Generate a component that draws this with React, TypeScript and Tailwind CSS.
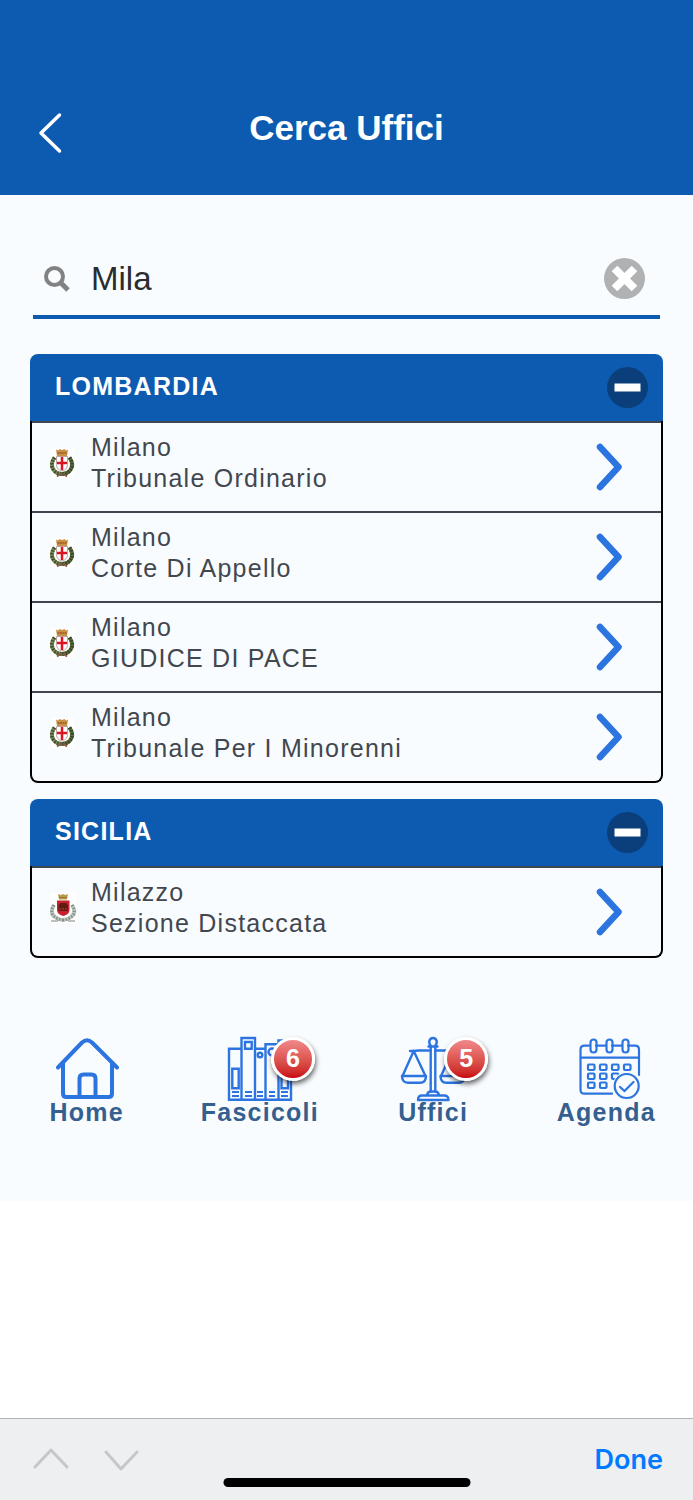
import React, { useState } from "react";

type Office = { city: string; name: string };

const regions: { name: string; crest: React.ReactNode; offices: Office[] }[] = [
  {
    name: "LOMBARDIA",
    crest: <MilanoCrest />,
    offices: [
      { city: "Milano", name: "Tribunale Ordinario" },
      { city: "Milano", name: "Corte Di Appello" },
      { city: "Milano", name: "GIUDICE DI PACE" },
      { city: "Milano", name: "Tribunale Per I Minorenni" },
    ],
  },
  {
    name: "SICILIA",
    crest: <MilazzoCrest />,
    offices: [{ city: "Milazzo", name: "Sezione Distaccata" }],
  },
];

const navItems = [
  { label: "Home", icon: <HomeIcon />, badge: 0 },
  { label: "Fascicoli", icon: <BindersIcon />, badge: 6 },
  { label: "Uffici", icon: <ScalesIcon />, badge: 5 },
  { label: "Agenda", icon: <CalendarIcon />, badge: 0 },
];

function MilanoCrest() {
  return (
    <svg width="27" height="30" viewBox="0 0 27 30" aria-hidden="true">
      <rect x="1" width="23" height="30" fill="#fff" />
      <path d="M4.500 9.500Q-0.500 17 4 22.500Q7 26 12 26" fill="none" stroke="#7d8a5c" strokeWidth="4" />
      <path d="M19.500 9.500Q24.500 17 20 22.500Q17 26 12 26" fill="none" stroke="#5c6b42" strokeWidth="4" />
      <path d="M4.500 9.500Q-0.500 17 4 22.500Q7 26 12 26" fill="none" stroke="#3d4e27" strokeWidth="3.500" strokeDasharray="1.500 1.500" />
      <path d="M19.500 9.500Q24.500 17 20 22.500Q17 26 12 26" fill="none" stroke="#34451f" strokeWidth="3.500" strokeDasharray="1.500 1.500" />
      <path d="M7 28.500l4-3M17 28.500l-4-3" stroke="#8b5a4a" strokeWidth="2" />
      <path d="M6 1.500l2 1 1.500-1.500 2.500 1 2.500-1 1.500 1.500 2-1-1 6.500h-10z" fill="#c98f45" />
      <path d="M7.500 5h9" stroke="#9a5a26" strokeWidth="1.500" strokeDasharray="2 0.500" />
      <path d="M6.500 8.500h11v8q0 5-5.500 6.500q-5.500-1.500-5.500-6.500z" fill="#fff" stroke="#b9a3a3" />
      <path d="M12 9v13M7 15h10" stroke="#dc1420" strokeWidth="2.500" />
    </svg>
  );
}

function MilazzoCrest() {
  return (
    <svg width="27" height="30" viewBox="0 0 27 30" aria-hidden="true">
      <rect width="26" height="30" fill="#fff" />
      <path d="M4 12Q-1 20 5 24Q9 27 13 27" fill="none" stroke="#c3cac4" strokeWidth="4" />
      <path d="M22 12Q27 20 21 24Q17 27 13 27" fill="none" stroke="#c3cac4" strokeWidth="4" />
      <path d="M4 12Q-1 20 5 24Q9 27 13 27" fill="none" stroke="#849086" strokeWidth="3" strokeDasharray="1.500 1.500" />
      <path d="M22 12Q27 20 21 24Q17 27 13 27" fill="none" stroke="#849086" strokeWidth="3" strokeDasharray="1.500 1.500" />
      <path d="M1 28h7M18 28h7" stroke="#a9a9a9" strokeWidth="1.500" />
      <path d="M8 1l2.500 1 2.500-1 2.500 1 2.500-1-1 5.500h-8z" fill="#b89a4c" />
      <path d="M9 4.500h8" stroke="#8a6c2c" strokeDasharray="1.500 0.500" />
      <path d="M7 7.500h12.500v9q0 5-6.200 6.500q-6.300-1.500-6.300-6.500z" fill="#c9202d" />
      <path d="M8.500 18v-5.500l2-2.500h5.500l2 2.500v5.500z" fill="#5c1d14" />
      <path d="M9 16h9" stroke="#b3402c" strokeWidth="1" strokeDasharray="2 1" />
    </svg>
  );
}

function HomeIcon() {
  return (
    <svg width="70" height="66" viewBox="0 0 70 66" fill="none" stroke="#2c74e0" strokeWidth="4" strokeLinecap="round" aria-hidden="true">
      <path d="M6 31.500L30 6.500Q35 2 40 6.500L65 31.500" />
      <path d="M11 27.500V57.500Q11 61 14.500 61H56.500Q60 61 60 57.500V27.500" />
      <path d="M27.500 60V42.500Q27.500 38.500 31.500 38.500H39.500Q43.500 38.500 43.500 42.500V60" />
    </svg>
  );
}

function BindersIcon() {
  return (
    <svg width="70" height="66" viewBox="0 0 70 66" fill="none" stroke="#2c74e0" strokeWidth="2.400" aria-hidden="true">
      <path d="M16.500 12.700H4V63.700H66V4.500H53.500V63.700M16.500 63.700V2H30V63.700M30 12.700H40.500M40.500 63.700V8.300H53.500" />
      <path d="M7.300 32.700H13.700V52.300H7.300zM56.500 32.700H63V52.300H56.500zM20 6H26.700V12.700H20z" />
      <circle cx="35" cy="19" r="2.300" />
      <circle cx="47" cy="16" r="3.500" />
      <path
        d="M7 56h7M20 56h7M32 56h6M44 56h6M56 56h7M7 60h7M20 60h7M32 60h6M44 60h6M56 60h7"
        strokeWidth="1.800"
      />
    </svg>
  );
}

function ScalesIcon() {
  return (
    <svg width="70" height="66" viewBox="0 0 70 66" fill="none" stroke="#2c74e0" strokeWidth="2.400" strokeLinecap="round" strokeLinejoin="round" aria-hidden="true">
      <path d="M33 10Q30.500 7.500 31.500 4.500Q32.500 2 35 2Q37.500 2 38.500 4.500Q39.500 7.500 37 10M30.500 10.500H39.500" />
      <path d="M32.700 11V55.500M37.300 11V55.500" />
      <path d="M12 15H16L20 14.500H32.500M37.500 14.500H50L54 15H58" />
      <path d="M15.700 15L4.500 40M15.700 15L27.500 40M54.500 15L43 40M54.500 15L66 40" />
      <path d="M4 40H28Q28 46.700 22 46.700H10Q4 46.700 4 40zM42.500 40H66.500Q66.500 46.700 60.500 46.700H48.500Q42.500 46.700 42.500 40z" />
      <path d="M29 59.500Q29.500 55.500 33 55.500H37Q40.500 55.500 41 59.500M20 64Q20 59.500 24 59.500H46Q50.500 59.500 50.500 64z" />
    </svg>
  );
}

function CalendarIcon() {
  return (
    <svg width="70" height="66" viewBox="0 0 70 66" fill="none" stroke="#2c74e0" strokeWidth="2.200" strokeLinecap="round" aria-hidden="true">
      <path d="M18 9.700H13.500Q9.500 9.700 9.500 13.700V53.700Q9.500 57.700 13.500 57.700H41M25 9.700H34.500M41 9.700H50.500M57 9.700H64Q68 9.700 68 13.700V39M9.500 21.700H68" />
      <rect x="19.500" y="3.500" width="6" height="13" rx="3" />
      <rect x="35.500" y="3.500" width="6" height="13" rx="3" />
      <rect x="51.500" y="3.500" width="6" height="13" rx="3" />
      {[17, 29, 41, 53].map((x) => (
        <rect key={x} x={x} y="28.500" width="6.500" height="5.500" rx="1" />
      ))}
      {[17, 29, 41].map((x) => (
        <rect key={x} x={x} y="37.500" width="6.500" height="5.500" rx="1" />
      ))}
      {[17, 29].map((x) => (
        <rect key={x} x={x} y="46.500" width="6.500" height="5.500" rx="1" />
      ))}
      <circle cx="55.700" cy="50" r="14" fill="#f9fcff" stroke="none" />
      <circle cx="55.700" cy="50" r="12" />
      <path d="M49 51L53.500 55L62.500 46" />
    </svg>
  );
}

const Region = ({ name, crest, offices }: (typeof regions)[number]) => {
  const [open, setOpen] = useState(true);

  return (
    <section>
      <div className="flex h-[67px] items-center justify-between rounded-t-lg bg-[#0d5bb0] pr-[15px] pl-[25px]">
        <h2 className="pb-[3px] text-[25px] leading-8 font-bold tracking-wider text-white">{name}</h2>
        <button type="button" aria-label={name} aria-expanded={open} onClick={() => setOpen(!open)}>
          <svg width="41" height="41" viewBox="0 0 41 41" aria-hidden="true">
            <circle cx="20.500" cy="20.500" r="20.500" fill="#0a3f7b" />
            <path d="M7.500 20.500h26" stroke="#fff" strokeWidth="8" />
          </svg>
        </button>
      </div>
      {open && (
        <ul className="overflow-hidden rounded-b-lg border-x-2 border-b-2 border-black">
          {offices.map((office) => (
            <li key={office.name}>
              <a href="#" className="flex h-[90px] justify-between border-t-2 border-[#3f464f] pr-[36px] pl-[18px]">
                <div className="flex h-[79px] items-center gap-[14px]">
                  {crest}
                  <p className="text-[25px] leading-[31px] tracking-wider text-[#42474e]">
                    {office.city}
                    <br />
                    {office.name}
                  </p>
                </div>
                <svg className="self-center" width="32" height="50" viewBox="0 0 32 50" aria-hidden="true">
                  <path d="M7 5L25.500 25L7 45" fill="none" stroke="#2c74e0" strokeWidth="6.500" strokeLinecap="round" strokeLinejoin="round" />
                </svg>
              </a>
            </li>
          ))}
        </ul>
      )}
    </section>
  );
};

const App = () => {
  const [query, setQuery] = useState("Mila");

  return (
    <div className="flex min-h-screen flex-col bg-white font-['Liberation_Sans',Arial,sans-serif]">
      <header className="grid grid-cols-[1fr_auto_1fr] items-center bg-[#0d5bb0] px-9 pt-[100px] pb-[39px] text-white">
        <button type="button" aria-label="Indietro" className="justify-self-start">
          <svg width="28" height="56" viewBox="0 0 28 56" aria-hidden="true">
            <path d="M23.500 15L5 33L23.500 51" fill="none" stroke="currentColor" strokeWidth="3.500" strokeLinecap="round" strokeLinejoin="round" />
          </svg>
        </button>
        <h1 className="text-[35px] leading-10 font-bold">Cerca Uffici</h1>
      </header>

      <main className="bg-[#f9fcff] pt-[47px] pb-[77px]">
        <form className="mx-[33px] flex h-[77px] items-center border-b-4 border-[#0d5bb0] pr-[15px] pl-[10px]">
          <svg width="28" height="28" viewBox="0 0 28 28" fill="none" stroke="#828282" aria-hidden="true">
            <circle cx="11.500" cy="11.500" r="8.500" strokeWidth="4" />
            <path d="M17.500 17.500L25 25" strokeWidth="5" />
          </svg>
          <input
            type="text"
            aria-label="Cerca"
            value={query}
            onChange={(e) => setQuery(e.target.value)}
            className="ml-5 min-w-0 flex-1 bg-transparent text-[33px] leading-10 text-[#292c2f] outline-none"
          />
          <button type="button" aria-label="Cancella" onClick={() => setQuery("")}>
            <svg width="41" height="41" viewBox="0 0 41 41" aria-hidden="true">
              <circle cx="20.500" cy="20.500" r="20.500" fill="#b0b1b2" />
              <path d="M10.500 10.500L30.500 30.500M30.500 10.500L10.500 30.500" stroke="#fff" strokeWidth="8" />
            </svg>
          </button>
        </form>

        <div className="mx-[30px] mt-[35px] flex flex-col gap-4">
          {regions.map((region) => (
            <Region key={region.name} {...region} />
          ))}
        </div>

        <nav className="mt-[78px] grid grid-cols-4">
          {navItems.map(({ label, icon, badge }) => (
            <a key={label} href="#" className="flex flex-col items-center">
              <div className="relative">
                {icon}
                {badge > 0 && (
                  <span className="absolute top-px -right-5 flex size-[44px] items-center justify-center rounded-full border-3 border-white bg-linear-to-b from-[#f0888a] to-[#c8000f] text-[25px] font-bold text-white shadow-[1px_3px_5px_rgba(0,0,0,0.6)]">
                    {badge}
                  </span>
                )}
              </div>
              <span className="-mt-0.5 text-[25px] leading-6 font-bold tracking-wider text-[#34608f]">
                {label}
              </span>
            </a>
          ))}
        </nav>
      </main>

      <footer className="relative mt-auto flex h-[82px] items-center justify-between border-t border-[#b3b3b6] bg-[#eeeff0] px-[30px]">
        <div className="flex gap-7">
          <button type="button" aria-label="Precedente">
            <svg width="42" height="28" viewBox="0 0 42 28" aria-hidden="true">
              <path d="M5 21L21 4L37 21" fill="none" stroke="#c6c7c8" strokeWidth="3" strokeLinecap="round" strokeLinejoin="round" />
            </svg>
          </button>
          <button type="button" aria-label="Successivo">
            <svg width="42" height="28" viewBox="0 0 42 28" aria-hidden="true">
              <path d="M6 6L21 23L37 6" fill="none" stroke="#c6c7c8" strokeWidth="3" strokeLinecap="round" strokeLinejoin="round" />
            </svg>
          </button>
        </div>
        <button type="button" className="pt-0.5 font-['Inter',sans-serif] text-[27px] font-semibold text-[#007aff]">
          Done
        </button>
        <div className="absolute bottom-[13px] left-1/2 h-[9px] w-[247px] -translate-x-1/2 rounded-full bg-black" />
      </footer>
    </div>
  );
};

export default App;
